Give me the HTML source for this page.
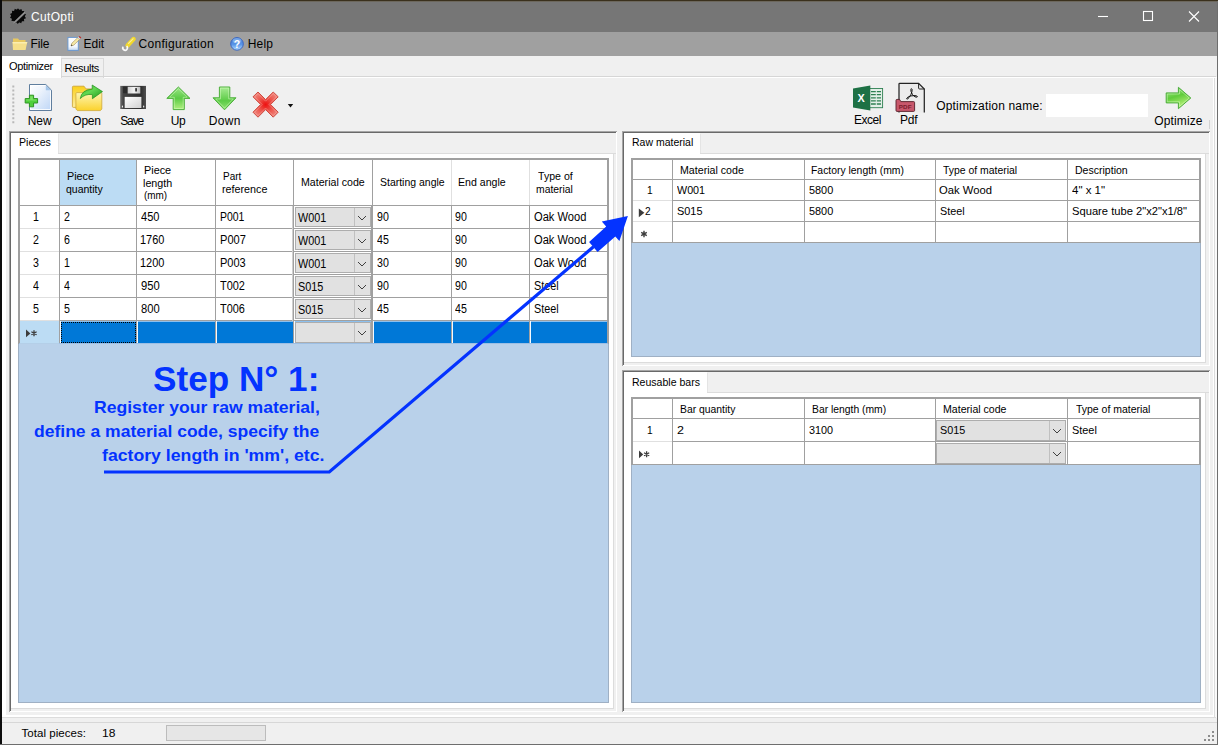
<!DOCTYPE html>
<html lang="en">
<head>
<meta charset="utf-8">
<title>CutOpti</title>
<style>
*{box-sizing:border-box;margin:0;padding:0}
html,body{width:1218px;height:745px;overflow:hidden;background:#f0f0f0}
body{position:relative;font-family:"Liberation Sans",sans-serif;font-size:11px;color:#000}
.a{position:absolute}
.t{position:absolute;white-space:nowrap;line-height:1;color:#000}
.w{color:#fff}
.blue{color:#0433ff;font-weight:bold}
svg{position:absolute;overflow:visible}
</style>
</head>
<body>

<div class="a" style="left:0px;top:0px;width:1218px;height:32px;background:#767676"></div>
<div class="a" style="left:0px;top:32px;width:1218px;height:24px;background:#a0a0a0"></div>
<div class="a" style="left:0px;top:0px;width:1218px;height:1px;background:#3a301c"></div>
<div class="a" style="left:0px;top:1px;width:1218px;height:1px;background:#6c675c"></div>
<svg style="left:10px;top:8px" width="16" height="16" viewBox="0 0 16 16"><g fill="#080808"><circle cx="8" cy="8" r="6.4"/><path d="M8 0.2 L9.3 2 L11.4 1 L12 3.1 L14.3 3 L14 5.3 L16 6.3 L14.8 8.2 L16 10.2 L13.9 11 L14.2 13.3 L11.9 13.2 L11.2 15.3 L9.2 14.3 L7.8 16 L6.4 14.2 L4.3 15.2 L3.8 13 L1.5 13 L1.9 10.8 L0 9.7 L1.2 7.8 L0 5.9 L2.1 5 L1.9 2.8 L4.1 2.9 L4.8 0.8 L6.8 1.8 Z"/></g><path d="M3.2 14.6 L14.6 3.6 L15.6 5.2 L4.8 15.6 Z" fill="#808080"/><path d="M3.6 14.9 L14.9 4" stroke="#a8a8a8" stroke-width=".7"/></svg>
<div class="t w" style="left:30.9px;top:11px;font-size:12px;letter-spacing:0.367px;">CutOpti</div>
<svg style="left:1095px;top:6px" width="110" height="20" viewBox="0 0 110 20"><g stroke="#fff" stroke-width="1.1" fill="none"><path d="M3 10.5 H13"/><rect x="48.5" y="5.5" width="9" height="9"/><path d="M94 5.5 L104 15.5 M104 5.5 L94 15.5"/></g></svg>
<svg style="left:12px;top:36px" width="16" height="16" viewBox="0 0 16 16"><path d="M1 2.5 h5 l1.2 1.5 h6.3 v9.5 h-12.5z" fill="#e8c860"/><path d="M0.5 6 h14.8 l-1.8 8 h-12.5z" fill="#f5df8a"/><path d="M0.5 6 h14.8 l-0.4 1.6 h-14z" fill="#fbeeb0"/></svg>
<div class="t" style="left:30.54px;top:38px;font-size:12px;letter-spacing:-0.127px;">File</div>
<svg style="left:67px;top:35px" width="16" height="17" viewBox="0 0 16 17"><defs><linearGradient id="gpg2" x1="0" y1="0" x2="0" y2="1"><stop offset="0" stop-color="#ffffff"/><stop offset=".7" stop-color="#f4f8fd"/><stop offset="1" stop-color="#c4d8f0"/></linearGradient></defs><rect x="0.9" y="2.4" width="10.4" height="13" fill="url(#gpg2)" stroke="#6b98d0" stroke-width="1"/><path d="M4 11 L4.9 8.2 L10.6 2.8 L12.4 4.6 L6.8 10.1 Z" fill="#f7eaa6" stroke="#a08850" stroke-width=".6"/><path d="M10.6 2.8 L11.6 1.8 L13.4 3.6 L12.4 4.6Z" fill="#d8d8d8"/><path d="M11.6 1.8 L12.6 0.9 L14.3 2.6 L13.4 3.6Z" fill="#c02c2c"/><path d="M4 11 L4.5 9.5 L5.5 10.5Z" fill="#333"/></svg>
<div class="t" style="left:83.54px;top:38px;font-size:12px;letter-spacing:-0.040px;">Edit</div>
<svg style="left:121px;top:36px" width="17" height="16" viewBox="0 0 17 16"><path d="M6.6 9.4 L12.6 3" stroke="#f2d82c" stroke-width="4.4" stroke-linecap="round"/><path d="M7.6 7.4 L12 2.8" stroke="#fbf09a" stroke-width="1.2" stroke-linecap="round"/><path d="M2.2 10.6 A2.3 2.3 0 1 0 5.6 10.2" fill="none" stroke="#f8f8f8" stroke-width="1.6"/></svg>
<div class="t" style="left:138.4px;top:38px;font-size:12px;letter-spacing:0.332px;">Configuration</div>
<svg style="left:229px;top:36px" width="16" height="16" viewBox="0 0 16 16"><defs><linearGradient id="ghelp" x1="0" y1="0" x2="0" y2="1"><stop offset="0" stop-color="#3f78d4"/><stop offset=".55" stop-color="#5a96e8"/><stop offset="1" stop-color="#b4dcff"/></linearGradient></defs><circle cx="8" cy="7.9" r="6.3" fill="url(#ghelp)" stroke="#3a66c0" stroke-width="1"/><ellipse cx="8" cy="4.6" rx="4.4" ry="2.6" fill="#9cc4f4" opacity=".55"/><text x="8" y="11.6" font-family="Liberation Sans, sans-serif" font-weight="bold" font-size="10.5" text-anchor="middle" fill="#fff">?</text></svg>
<div class="t" style="left:247.64px;top:38px;font-size:12px;letter-spacing:0.227px;">Help</div>
<div class="a" style="left:2px;top:77px;width:1215px;height:641px;background:#fff"></div>
<div class="a" style="left:6px;top:78px;width:1207px;height:637px;background:#f0f0f0"></div>
<div class="a" style="left:2px;top:56px;width:59px;height:22px;background:#fff"></div>
<div class="t" style="left:9.01px;top:61px;font-size:11px;letter-spacing:-0.365px;">Optimizer</div>
<div class="a" style="left:61px;top:58px;width:43px;height:20px;background:#f0f0f0;border:1px solid #d9d9d9;border-bottom:none"></div>
<div class="t" style="left:64.62px;top:63px;font-size:11px;letter-spacing:-0.320px;">Results</div>
<div class="a" style="left:61px;top:76px;width:1155px;height:1px;background:#d6d6d6"></div>
<div class="a" style="left:1213px;top:78px;width:1px;height:640px;background:#fff"></div>
<div class="a" style="left:1214px;top:78px;width:1px;height:640px;background:#dcdcdc"></div>
<div class="a" style="left:1215px;top:78px;width:2px;height:640px;background:#fafafa"></div>
<div class="a" style="left:2px;top:717px;width:1214px;height:1px;background:#dcdcdc"></div>
<div class="a" style="left:2px;top:718px;width:1215px;height:4px;background:#f0f0f0"></div>
<svg style="left:12px;top:85px" width="3" height="40" viewBox="0 0 3 40"><path d="M1.3 0.6 V39" stroke="#b8b8b8" stroke-width="2" stroke-dasharray="2 1.95"/></svg>
<svg style="left:0;top:78px" width="1218" height="54" viewBox="0 78 1218 54">
<defs>
<linearGradient id="gpage" x1="0" y1="0" x2="1" y2="1"><stop offset="0" stop-color="#ffffff"/><stop offset=".35" stop-color="#eef4fc"/><stop offset="1" stop-color="#bdd5f6"/></linearGradient>
<linearGradient id="ggreen" x1="0" y1="0" x2="0" y2="1"><stop offset="0" stop-color="#a4e88c"/><stop offset="1" stop-color="#4fbe3a"/></linearGradient>
<linearGradient id="ggreen2" x1="0" y1="0" x2="0" y2="1"><stop offset="0" stop-color="#8fe070"/><stop offset=".5" stop-color="#55c83c"/><stop offset="1" stop-color="#8fe070"/></linearGradient>
<linearGradient id="gup" x1="0" y1="0" x2="0" y2="1"><stop offset="0" stop-color="#9ae686"/><stop offset=".5" stop-color="#5ccb46"/><stop offset="1" stop-color="#b2f080"/></linearGradient>
<linearGradient id="gdn" x1="0" y1="0" x2="0" y2="1"><stop offset="0" stop-color="#a8ec94"/><stop offset=".6" stop-color="#5ccb46"/><stop offset="1" stop-color="#90e272"/></linearGradient>
<linearGradient id="gopt" x1="0" y1="0" x2=".35" y2="1"><stop offset="0" stop-color="#a6ea90"/><stop offset=".5" stop-color="#60cc3c"/><stop offset="1" stop-color="#b8f27a"/></linearGradient>
<linearGradient id="gfold" x1="0" y1="0" x2="0" y2="1"><stop offset="0" stop-color="#fdf6b4"/><stop offset="1" stop-color="#fbd22c"/></linearGradient>
<linearGradient id="gfoldb" x1="0" y1="0" x2="0" y2="1"><stop offset="0" stop-color="#fbd01c"/><stop offset="1" stop-color="#fdeea0"/></linearGradient>
<linearGradient id="garrow" x1="0" y1="0" x2="1" y2="1"><stop offset="0" stop-color="#2fa526"/><stop offset=".45" stop-color="#62d852"/><stop offset="1" stop-color="#1f9a1a"/></linearGradient>
<linearGradient id="gdisk" x1="0" y1="0" x2="1" y2="0"><stop offset="0" stop-color="#6e6e6e"/><stop offset=".12" stop-color="#444"/><stop offset=".8" stop-color="#2e2e2e"/><stop offset="1" stop-color="#505050"/></linearGradient>
<linearGradient id="gshut" x1="0" y1="0" x2="1" y2="0"><stop offset="0" stop-color="#cfcfcf"/><stop offset=".5" stop-color="#f4f4f4"/><stop offset="1" stop-color="#bdbdbd"/></linearGradient>
<linearGradient id="gsave" x1="0" y1="0" x2="1" y2="1"><stop offset="0" stop-color="#ffffff"/><stop offset="1" stop-color="#d0d0d0"/></linearGradient>
<radialGradient id="gred" cx=".5" cy=".5" r=".6"><stop offset="0" stop-color="#ee1010"/><stop offset=".45" stop-color="#ec5048"/><stop offset="1" stop-color="#f08a80"/></radialGradient>
</defs>
<!-- New -->
<path d="M29.5 84.5 H45.8 L51.5 90.2 V110.5 H29.5 Z" fill="url(#gpage)" stroke="#5f7e9e" stroke-width="1"/>
<path d="M30.5 85.5 H45.4 L50.5 90.6 V109.5 H30.5 Z" fill="none" stroke="#ffffff" stroke-opacity=".85" stroke-width="1"/>
<path d="M45.8 85.2 V90.2 H50.9 Z" fill="#a4c6ea"/>
<path d="M29.4 95.2 H33.6 V98.6 H37.6 V103 H33.6 V106.8 H29.4 V103 H25.2 V98.6 H29.4 Z" fill="#4fcf3c" stroke="#2f9424" stroke-width="1" stroke-linejoin="round"/>
<path d="M30.2 96.2 H32.8 V99.4 H36.6 V100.6 H26.2 V99.4 H30.2 Z" fill="#8fe878" opacity=".7"/>
<!-- Open -->
<path d="M72.4 87.2 Q72.4 86.2 73.4 86.2 H84 L86 88.9 H97 V107.4 H73.4 Q72.4 107.4 72.4 106.4 Z" fill="url(#gfoldb)" stroke="#c9a030" stroke-width=".8"/>
<path d="M75.9 93.6 Q75.9 92.6 76.9 92.6 H100.8 Q101.8 92.6 101.8 93.6 V109 L100.4 110.6 H77.4 L75.9 109 Z" fill="url(#gfold)" stroke="#cfa838" stroke-width=".8"/>
<path d="M80.3 98.6 Q81.5 89.6 92.2 89.2 V85 L102.5 91.6 L92.4 98.7 V94.6 Q85 93.6 80.3 98.6 Z" fill="url(#garrow)" stroke="#1f8f1c" stroke-width=".7" stroke-linejoin="round"/>
<!-- Save -->
<rect x="120.2" y="85.9" width="25.8" height="23.1" fill="url(#gdisk)"/>
<rect x="123.1" y="86.8" width="4.6" height="6.4" fill="#2c2c2c"/>
<rect x="127.7" y="86.8" width="12.6" height="6.7" fill="url(#gshut)"/>
<rect x="135.2" y="88" width="1.8" height="3.6" rx=".6" fill="#3a3a3a"/>
<rect x="124.7" y="96.9" width="16.7" height="11.1" fill="url(#gsave)"/>
<rect x="121.9" y="105.4" width="1.1" height="2.2" rx=".5" fill="#f0f0f0"/><rect x="143.1" y="105.4" width="1.1" height="2.2" rx=".5" fill="#f0f0f0"/>
<!-- Up -->
<path d="M178.4 87 L190 98.4 H184.3 V109.6 H173.2 V98.4 H166.8 Z" fill="url(#gup)" stroke="#4fb03e" stroke-width="1" stroke-linejoin="round"/>
<path d="M178.4 88.7 L187.2 97.3 H183.2 V108.5 H174.3 V97.3 H169.6 Z" fill="none" stroke="#d8fcc4" stroke-opacity=".55" stroke-width=".9"/>
<!-- Down -->
<path d="M224.5 109.8 L236 97.8 H229.8 V87 H219.4 V97.8 H213 Z" fill="url(#gdn)" stroke="#4fb03e" stroke-width="1" stroke-linejoin="round"/>
<path d="M224.5 108.1 L233.3 98.9 H228.7 V88.1 H220.5 V98.9 H215.7 Z" fill="none" stroke="#d8fcc4" stroke-opacity=".55" stroke-width=".9"/>
<!-- Delete X -->
<path d="M253 96.8 L258 92 L265.6 99.6 L273.2 92 L278.2 96.8 L270.6 104.5 L278.2 112.2 L273.2 117.2 L265.6 109.6 L258 117.2 L253 112.2 L260.6 104.5 Z" fill="url(#gred)" stroke="#cf4a40" stroke-width="1" stroke-linejoin="round"/>
<path d="M254.6 96.8 L258 93.6 L265.6 101.2 L273.2 93.6 L276.6 96.8 L269 104.5 L276.6 112.2 L273.2 115.6 L265.6 108 L258 115.6 L254.6 112.2 L262.2 104.5 Z" fill="none" stroke="#ffd8d0" stroke-opacity=".4" stroke-width=".8"/>
<path d="M287.8 104 H293.2 L290.5 107.4 Z" fill="#111"/>
<!-- Excel -->
<rect x="868" y="88.5" width="14.6" height="19.2" fill="#e4efe8" stroke="#2f8052" stroke-width=".9"/>
<g stroke="#2f8052" stroke-width="1.3"><path d="M871 91.6 H881 M871 94.7 H881 M871 97.8 H881 M871 100.9 H881 M871 104 H881"/></g>
<path d="M876.3 89 V107" stroke="#e4efe8" stroke-width="1"/>
<path d="M853 88.4 L870.3 85.6 V110.4 L853 107.4 Z" fill="#1e7145"/>
<!-- Pdf -->
<path d="M899 112.4 V84 Q899 83.3 899.7 83.3 H918.6 L924.3 89 V112.4" fill="#ececec" stroke="#242424" stroke-width="1.25"/>
<path d="M918.6 83.3 V88 Q918.6 89 919.6 89 H924.3" fill="none" stroke="#242424" stroke-width="1"/>
<path d="M896 100.4 Q896 99.4 897 99.4 H899.6 L900.8 101.6 H913.6 Q914.6 101.6 914.6 102.6 V110.4 Q914.6 111.4 913.6 111.4 H897 Q896 111.4 896 110.4 Z" fill="#c8586c" stroke="#56202a" stroke-width=".9"/>
<path d="M911.4 88.6 Q912.4 88.6 912 91.4 Q911.6 94 909 97.6 Q907.6 99.4 906.8 99 Q906.2 98.4 907.8 97.2 Q910.4 95.4 915 95.6 Q917.6 95.8 917.4 96.8 Q917 97.6 915 96.8 Q912 95.2 911 91.4 Q910.6 88.8 911.4 88.6Z" fill="none" stroke="#111" stroke-width="1"/>
<text x="905.3" y="109.3" font-family="Liberation Sans, sans-serif" font-weight="bold" font-size="6.2" text-anchor="middle" fill="#7a1c2c" letter-spacing=".3">PDF</text>
<!-- Optimize -->
<path d="M1166.2 92.9 H1178.4 V87.3 L1190.8 98 L1178.4 108.7 V102.9 H1166.2 Z" fill="url(#gopt)" stroke="#4cac3c" stroke-width="1" stroke-linejoin="round"/>
<path d="M1167.3 94 H1179.5 V89.6 L1189.2 98 L1179.5 106.4 V101.8 H1167.3 Z" fill="none" stroke="#dcfcc8" stroke-opacity=".5" stroke-width=".9"/>
</svg>
<svg style="left:855.3px;top:92px" width="12" height="12" viewBox="0 0 12 12"><text x="6" y="9.9" font-family="Liberation Sans, sans-serif" font-weight="bold" font-size="10.8" text-anchor="middle" fill="#fff">X</text></svg>
<div class="t" style="left:27.74px;top:115px;font-size:12px;letter-spacing:-0.050px;">New</div>
<div class="t" style="left:72.36px;top:115px;font-size:12px;letter-spacing:-0.293px;">Open</div>
<div class="t" style="left:120.16px;top:115px;font-size:12px;letter-spacing:-1.080px;">Save</div>
<div class="t" style="left:170.7px;top:115px;font-size:12px;letter-spacing:-0.320px;">Up</div>
<div class="t" style="left:208.84px;top:115px;font-size:12px;letter-spacing:0.307px;">Down</div>
<div class="t" style="left:853.94px;top:114px;font-size:12px;letter-spacing:-0.450px;">Excel</div>
<div class="t" style="left:900.04px;top:114px;font-size:12px;letter-spacing:-0.200px;">Pdf</div>
<div class="t" style="left:936.16px;top:100px;font-size:12px;letter-spacing:0.179px;">Optimization name:</div>
<div class="a" style="left:1046px;top:94px;width:102px;height:23px;background:#fff"></div>
<div class="t" style="left:1154.26px;top:115px;font-size:12px;letter-spacing:0.126px;">Optimize</div>
<div class="a" style="left:9px;top:131px;width:608px;height:581px;background:#fff"></div>
<div class="a" style="left:9px;top:131px;width:608px;height:1px;background:#a6a6a6"></div>
<div class="a" style="left:9px;top:131px;width:1px;height:581px;background:#a6a6a6"></div>
<div class="a" style="left:10px;top:132px;width:606px;height:1px;background:#696969"></div>
<div class="a" style="left:10px;top:132px;width:1px;height:579px;background:#696969"></div>
<div class="a" style="left:11px;top:133px;width:605px;height:21px;background:#f0f0f0"></div>
<div class="a" style="left:11px;top:133px;width:47px;height:22px;background:#fff"></div>
<div class="a" style="left:58px;top:153px;width:558px;height:1px;background:#dcdcdc"></div>
<div class="a" style="left:58px;top:134px;width:1px;height:19px;background:#e4e4e4"></div>
<div class="a" style="left:613px;top:154px;width:1px;height:555px;background:#dcdcdc"></div>
<div class="a" style="left:614px;top:154px;width:2px;height:557px;background:#f0f0f0"></div>
<div class="a" style="left:11px;top:708px;width:603px;height:1px;background:#dcdcdc"></div>
<div class="a" style="left:11px;top:709px;width:605px;height:2px;background:#f0f0f0"></div>
<div class="t" style="left:18.75px;top:137px;font-size:11.5px;transform-origin:0 0;transform:scaleX(0.9223);">Pieces</div>
<div class="a" style="left:18px;top:158px;width:591px;height:545px;background:#b9d1ea;border:1px solid #9fb0c4"></div>
<div class="a" style="left:18px;top:158px;width:591px;height:186px;background:#fff;border:1px solid #a0a0a0"></div>
<div class="a" style="left:19px;top:159px;width:589px;height:1px;background:#a0a0a0"></div>
<div class="a" style="left:19px;top:159px;width:1px;height:185px;background:#a0a0a0"></div>
<div class="a" style="left:59px;top:159px;width:1px;height:185px;background:#a0a0a0"></div>
<div class="a" style="left:136px;top:159px;width:1px;height:185px;background:#a0a0a0"></div>
<div class="a" style="left:215px;top:159px;width:1px;height:185px;background:#a0a0a0"></div>
<div class="a" style="left:293px;top:159px;width:1px;height:185px;background:#a0a0a0"></div>
<div class="a" style="left:372px;top:159px;width:1px;height:185px;background:#a0a0a0"></div>
<div class="a" style="left:451px;top:159px;width:1px;height:185px;background:#a0a0a0"></div>
<div class="a" style="left:529px;top:159px;width:1px;height:185px;background:#a0a0a0"></div>
<div class="a" style="left:607px;top:159px;width:1px;height:185px;background:#a0a0a0"></div>
<div class="a" style="left:451px;top:160px;width:1px;height:45px;background:#e0e0e0"></div>
<div class="a" style="left:529px;top:160px;width:1px;height:45px;background:#e0e0e0"></div>
<div class="a" style="left:19px;top:205px;width:589px;height:1px;background:#a0a0a0"></div>
<div class="a" style="left:19px;top:228px;width:589px;height:1px;background:#a0a0a0"></div>
<div class="a" style="left:19px;top:251px;width:589px;height:1px;background:#a0a0a0"></div>
<div class="a" style="left:19px;top:274px;width:589px;height:1px;background:#a0a0a0"></div>
<div class="a" style="left:19px;top:297px;width:589px;height:1px;background:#a0a0a0"></div>
<div class="a" style="left:19px;top:320px;width:589px;height:1px;background:#a0a0a0"></div>
<div class="a" style="left:19px;top:343px;width:589px;height:1px;background:#a0a0a0"></div>
<div class="a" style="left:20px;top:228px;width:39px;height:1px;background:#e0e0e0"></div>
<div class="a" style="left:20px;top:251px;width:39px;height:1px;background:#e0e0e0"></div>
<div class="a" style="left:20px;top:274px;width:39px;height:1px;background:#e0e0e0"></div>
<div class="a" style="left:20px;top:297px;width:39px;height:1px;background:#e0e0e0"></div>
<div class="a" style="left:20px;top:320px;width:39px;height:1px;background:#e0e0e0"></div>
<div class="a" style="left:371px;top:206px;width:1px;height:138px;background:#a0a0a0"></div>
<div class="a" style="left:292px;top:206px;width:1px;height:138px;background:#cfcfcf"></div>
<div class="a" style="left:60px;top:160px;width:76px;height:45px;background:#bcdcf4"></div>
<div class="t" style="left:66.64px;top:171px;font-size:11.5px;transform-origin:0 0;transform:scaleX(0.9390);">Piece</div>
<div class="t" style="left:66.48px;top:184px;font-size:11.5px;transform-origin:0 0;transform:scaleX(0.9135);">quantity</div>
<div class="t" style="left:143.63px;top:165px;font-size:11.5px;transform-origin:0 0;transform:scaleX(0.9426);">Piece</div>
<div class="t" style="left:143.40px;top:178px;font-size:11.5px;transform-origin:0 0;transform:scaleX(0.9331);">length</div>
<div class="t" style="left:143.51px;top:190px;font-size:11.5px;transform-origin:0 0;transform:scaleX(0.8617);">(mm)</div>
<div class="t" style="left:222.70px;top:171px;font-size:11.5px;transform-origin:0 0;transform:scaleX(0.8671);">Part</div>
<div class="t" style="left:222.20px;top:184px;font-size:11.5px;transform-origin:0 0;transform:scaleX(0.9350);">reference</div>
<div class="t" style="left:300.95px;top:177px;font-size:11.5px;transform-origin:0 0;transform:scaleX(0.9228);">Material code</div>
<div class="t" style="left:380.03px;top:177px;font-size:11.5px;transform-origin:0 0;transform:scaleX(0.9103);">Starting angle</div>
<div class="t" style="left:457.85px;top:177px;font-size:11.5px;transform-origin:0 0;transform:scaleX(0.9201);">End angle</div>
<div class="t" style="left:537.59px;top:171px;font-size:11.5px;transform-origin:0 0;transform:scaleX(0.9202);">Type of</div>
<div class="t" style="left:536.13px;top:184px;font-size:11.5px;transform-origin:0 0;transform:scaleX(0.9013);">material</div>
<div class="t" style="left:32.70px;top:211px;font-size:12px;transform-origin:0 0;transform:scaleX(0.8850);">1</div>
<div class="t" style="left:63.87px;top:211px;font-size:12px;transform-origin:0 0;transform:scaleX(0.8850);">2</div>
<div class="t" style="left:140.88px;top:211px;font-size:12px;transform-origin:0 0;transform:scaleX(0.9213);">450</div>
<div class="t" style="left:219.66px;top:211px;font-size:12px;transform-origin:0 0;transform:scaleX(0.8710);">P001</div>
<div class="a" style="left:295px;top:207px;width:76px;height:20px;background:#e1e1e1;border:1px solid #adadad"></div>
<div class="a" style="left:354px;top:208px;width:1px;height:18px;background:#c0c0c0"></div>
<svg style="left:357px;top:214.5px" width="10" height="6" viewBox="0 0 10 6"><path d="M1 1 L5 5 L9 1" fill="none" stroke="#404040" stroke-width="1"/></svg>
<div class="t" style="left:298.35px;top:212px;font-size:12px;transform-origin:0 0;transform:scaleX(0.9017);">W001</div>
<div class="t" style="left:377.12px;top:211px;font-size:12px;transform-origin:0 0;transform:scaleX(0.8850);">90</div>
<div class="t" style="left:455.02px;top:211px;font-size:12px;transform-origin:0 0;transform:scaleX(0.8850);">90</div>
<div class="t" style="left:533.50px;top:211px;font-size:12px;transform-origin:0 0;transform:scaleX(0.9275);">Oak Wood</div>
<div class="t" style="left:32.97px;top:234px;font-size:12px;transform-origin:0 0;transform:scaleX(0.8850);">2</div>
<div class="t" style="left:63.87px;top:234px;font-size:12px;transform-origin:0 0;transform:scaleX(0.8850);">6</div>
<div class="t" style="left:140.28px;top:234px;font-size:12px;transform-origin:0 0;transform:scaleX(0.9141);">1760</div>
<div class="t" style="left:219.61px;top:234px;font-size:12px;transform-origin:0 0;transform:scaleX(0.9221);">P007</div>
<div class="a" style="left:295px;top:230px;width:76px;height:20px;background:#e1e1e1;border:1px solid #adadad"></div>
<div class="a" style="left:354px;top:231px;width:1px;height:18px;background:#c0c0c0"></div>
<svg style="left:357px;top:237.5px" width="10" height="6" viewBox="0 0 10 6"><path d="M1 1 L5 5 L9 1" fill="none" stroke="#404040" stroke-width="1"/></svg>
<div class="t" style="left:298.35px;top:235px;font-size:12px;transform-origin:0 0;transform:scaleX(0.9017);">W001</div>
<div class="t" style="left:377.39px;top:234px;font-size:12px;transform-origin:0 0;transform:scaleX(0.8850);">45</div>
<div class="t" style="left:455.02px;top:234px;font-size:12px;transform-origin:0 0;transform:scaleX(0.8850);">90</div>
<div class="t" style="left:533.50px;top:234px;font-size:12px;transform-origin:0 0;transform:scaleX(0.9275);">Oak Wood</div>
<div class="t" style="left:33.13px;top:257px;font-size:12px;transform-origin:0 0;transform:scaleX(0.8850);">3</div>
<div class="t" style="left:63.60px;top:257px;font-size:12px;transform-origin:0 0;transform:scaleX(0.8850);">1</div>
<div class="t" style="left:140.28px;top:257px;font-size:12px;transform-origin:0 0;transform:scaleX(0.9141);">1200</div>
<div class="t" style="left:219.62px;top:257px;font-size:12px;transform-origin:0 0;transform:scaleX(0.9180);">P003</div>
<div class="a" style="left:295px;top:253px;width:76px;height:20px;background:#e1e1e1;border:1px solid #adadad"></div>
<div class="a" style="left:354px;top:254px;width:1px;height:18px;background:#c0c0c0"></div>
<svg style="left:357px;top:260.5px" width="10" height="6" viewBox="0 0 10 6"><path d="M1 1 L5 5 L9 1" fill="none" stroke="#404040" stroke-width="1"/></svg>
<div class="t" style="left:298.35px;top:258px;font-size:12px;transform-origin:0 0;transform:scaleX(0.9017);">W001</div>
<div class="t" style="left:377.23px;top:257px;font-size:12px;transform-origin:0 0;transform:scaleX(0.8850);">30</div>
<div class="t" style="left:455.02px;top:257px;font-size:12px;transform-origin:0 0;transform:scaleX(0.8850);">90</div>
<div class="t" style="left:533.50px;top:257px;font-size:12px;transform-origin:0 0;transform:scaleX(0.9275);">Oak Wood</div>
<div class="t" style="left:33.29px;top:280px;font-size:12px;transform-origin:0 0;transform:scaleX(0.8850);">4</div>
<div class="t" style="left:64.19px;top:280px;font-size:12px;transform-origin:0 0;transform:scaleX(0.8850);">4</div>
<div class="t" style="left:140.59px;top:280px;font-size:12px;transform-origin:0 0;transform:scaleX(0.9359);">950</div>
<div class="t" style="left:220.28px;top:280px;font-size:12px;transform-origin:0 0;transform:scaleX(0.9125);">T002</div>
<div class="a" style="left:295px;top:276px;width:76px;height:20px;background:#e1e1e1;border:1px solid #adadad"></div>
<div class="a" style="left:354px;top:277px;width:1px;height:18px;background:#c0c0c0"></div>
<svg style="left:357px;top:283.5px" width="10" height="6" viewBox="0 0 10 6"><path d="M1 1 L5 5 L9 1" fill="none" stroke="#404040" stroke-width="1"/></svg>
<div class="t" style="left:297.91px;top:281px;font-size:12px;transform-origin:0 0;transform:scaleX(0.9037);">S015</div>
<div class="t" style="left:377.12px;top:280px;font-size:12px;transform-origin:0 0;transform:scaleX(0.8850);">90</div>
<div class="t" style="left:455.02px;top:280px;font-size:12px;transform-origin:0 0;transform:scaleX(0.8850);">90</div>
<div class="t" style="left:533.51px;top:280px;font-size:12px;transform-origin:0 0;transform:scaleX(0.9007);">Steel</div>
<div class="t" style="left:33.08px;top:303px;font-size:12px;transform-origin:0 0;transform:scaleX(0.8850);">5</div>
<div class="t" style="left:63.98px;top:303px;font-size:12px;transform-origin:0 0;transform:scaleX(0.8850);">5</div>
<div class="t" style="left:140.65px;top:303px;font-size:12px;transform-origin:0 0;transform:scaleX(0.9329);">800</div>
<div class="t" style="left:220.28px;top:303px;font-size:12px;transform-origin:0 0;transform:scaleX(0.9084);">T006</div>
<div class="a" style="left:295px;top:299px;width:76px;height:20px;background:#e1e1e1;border:1px solid #adadad"></div>
<div class="a" style="left:354px;top:300px;width:1px;height:18px;background:#c0c0c0"></div>
<svg style="left:357px;top:306.5px" width="10" height="6" viewBox="0 0 10 6"><path d="M1 1 L5 5 L9 1" fill="none" stroke="#404040" stroke-width="1"/></svg>
<div class="t" style="left:297.91px;top:304px;font-size:12px;transform-origin:0 0;transform:scaleX(0.9037);">S015</div>
<div class="t" style="left:377.39px;top:303px;font-size:12px;transform-origin:0 0;transform:scaleX(0.8850);">45</div>
<div class="t" style="left:455.29px;top:303px;font-size:12px;transform-origin:0 0;transform:scaleX(0.8850);">45</div>
<div class="t" style="left:533.51px;top:303px;font-size:12px;transform-origin:0 0;transform:scaleX(0.9007);">Steel</div>
<div class="a" style="left:20px;top:321px;width:39px;height:22px;background:#bcdcf4"></div>
<div class="a" style="left:60px;top:321px;width:76px;height:23px;background:#0078d7"></div>
<div class="a" style="left:60px;top:321px;width:1px;height:22px;background:#f4faff"></div>
<div class="a" style="left:61px;top:321px;width:75px;height:1px;background:#8cc0ee"></div>
<div class="a" style="left:137px;top:321px;width:78px;height:23px;background:#0078d7"></div>
<div class="a" style="left:137px;top:321px;width:1px;height:22px;background:#f4faff"></div>
<div class="a" style="left:138px;top:321px;width:77px;height:1px;background:#8cc0ee"></div>
<div class="a" style="left:216px;top:321px;width:77px;height:23px;background:#0078d7"></div>
<div class="a" style="left:216px;top:321px;width:1px;height:22px;background:#f4faff"></div>
<div class="a" style="left:217px;top:321px;width:76px;height:1px;background:#8cc0ee"></div>
<div class="a" style="left:294px;top:321px;width:78px;height:23px;background:#0078d7"></div>
<div class="a" style="left:294px;top:321px;width:1px;height:22px;background:#f4faff"></div>
<div class="a" style="left:295px;top:321px;width:77px;height:1px;background:#8cc0ee"></div>
<div class="a" style="left:373px;top:321px;width:78px;height:23px;background:#0078d7"></div>
<div class="a" style="left:373px;top:321px;width:1px;height:22px;background:#f4faff"></div>
<div class="a" style="left:374px;top:321px;width:77px;height:1px;background:#8cc0ee"></div>
<div class="a" style="left:452px;top:321px;width:77px;height:23px;background:#0078d7"></div>
<div class="a" style="left:452px;top:321px;width:1px;height:22px;background:#f4faff"></div>
<div class="a" style="left:453px;top:321px;width:76px;height:1px;background:#8cc0ee"></div>
<div class="a" style="left:530px;top:321px;width:77px;height:23px;background:#0078d7"></div>
<div class="a" style="left:530px;top:321px;width:1px;height:22px;background:#f4faff"></div>
<div class="a" style="left:531px;top:321px;width:76px;height:1px;background:#8cc0ee"></div>
<div class="a" style="left:19px;top:343px;width:589px;height:1px;background:#9dbfe4"></div>
<div class="a" style="left:20px;top:343px;width:39px;height:1px;background:#b4cfe8"></div>
<div class="a" style="left:61px;top:322px;width:75px;height:21px;border:1px dotted #000;background:#0078d7"></div>
<div class="a" style="left:295px;top:322px;width:76px;height:21px;background:#e1e1e1;border:1px solid #adadad"></div>
<div class="a" style="left:354px;top:323px;width:1px;height:19px;background:#c0c0c0"></div>
<svg style="left:357px;top:330.0px" width="10" height="6" viewBox="0 0 10 6"><path d="M1 1 L5 5 L9 1" fill="none" stroke="#404040" stroke-width="1"/></svg>
<div class="a" style="left:371px;top:321px;width:1px;height:22px;background:#a0a0a0"></div>
<svg style="left:25px;top:329px" width="14" height="9" viewBox="0 0 14 9"><path d="M1 0.6 L5.4 4.4 L1 8.2 Z" fill="#3c3c3c"/><path d="M9 1.2 V7.2 M6.4 2.7 L11.6 5.7 M11.6 2.7 L6.4 5.7" stroke="#3c3c3c" stroke-width="1.3"/></svg>
<div class="a" style="left:622px;top:131px;width:588px;height:235px;background:#fff"></div>
<div class="a" style="left:622px;top:131px;width:588px;height:1px;background:#a6a6a6"></div>
<div class="a" style="left:622px;top:131px;width:1px;height:235px;background:#a6a6a6"></div>
<div class="a" style="left:623px;top:132px;width:586px;height:1px;background:#696969"></div>
<div class="a" style="left:623px;top:132px;width:1px;height:233px;background:#696969"></div>
<div class="a" style="left:624px;top:133px;width:585px;height:21px;background:#f0f0f0"></div>
<div class="a" style="left:624px;top:133px;width:76px;height:22px;background:#fff"></div>
<div class="a" style="left:700px;top:153px;width:509px;height:1px;background:#dcdcdc"></div>
<div class="a" style="left:700px;top:134px;width:1px;height:19px;background:#e4e4e4"></div>
<div class="a" style="left:1205px;top:154px;width:1px;height:209px;background:#dcdcdc"></div>
<div class="a" style="left:1206px;top:154px;width:3px;height:211px;background:#f0f0f0"></div>
<div class="a" style="left:624px;top:362px;width:582px;height:1px;background:#dcdcdc"></div>
<div class="a" style="left:624px;top:363px;width:585px;height:2px;background:#f0f0f0"></div>
<div class="t" style="left:631.76px;top:137px;font-size:11.5px;transform-origin:0 0;transform:scaleX(0.9124);">Raw material</div>
<div class="a" style="left:631px;top:158px;width:570px;height:199px;background:#b9d1ea;border:1px solid #9fb0c4"></div>
<div class="a" style="left:631px;top:158px;width:570px;height:85px;background:#fff;border:1px solid #a0a0a0"></div>
<div class="a" style="left:632px;top:159px;width:568px;height:1px;background:#a0a0a0"></div>
<div class="a" style="left:632px;top:159px;width:1px;height:84px;background:#a0a0a0"></div>
<div class="a" style="left:672px;top:159px;width:1px;height:84px;background:#a0a0a0"></div>
<div class="a" style="left:804px;top:159px;width:1px;height:84px;background:#a0a0a0"></div>
<div class="a" style="left:935px;top:159px;width:1px;height:84px;background:#a0a0a0"></div>
<div class="a" style="left:1067px;top:159px;width:1px;height:84px;background:#a0a0a0"></div>
<div class="a" style="left:1199px;top:159px;width:1px;height:84px;background:#a0a0a0"></div>
<div class="a" style="left:632px;top:179px;width:568px;height:1px;background:#a0a0a0"></div>
<div class="a" style="left:632px;top:200px;width:568px;height:1px;background:#a0a0a0"></div>
<div class="a" style="left:632px;top:221px;width:568px;height:1px;background:#a0a0a0"></div>
<div class="a" style="left:632px;top:242px;width:568px;height:1px;background:#a0a0a0"></div>
<div class="a" style="left:633px;top:200px;width:39px;height:1px;background:#e0e0e0"></div>
<div class="a" style="left:633px;top:221px;width:39px;height:1px;background:#e0e0e0"></div>
<div class="t" style="left:679.65px;top:165px;font-size:11.5px;transform-origin:0 0;transform:scaleX(0.9243);">Material code</div>
<div class="t" style="left:811.47px;top:165px;font-size:11.5px;transform-origin:0 0;transform:scaleX(0.9036);">Factory length (mm)</div>
<div class="t" style="left:943.49px;top:165px;font-size:11.5px;transform-origin:0 0;transform:scaleX(0.9061);">Type of material</div>
<div class="t" style="left:1074.86px;top:165px;font-size:11.5px;transform-origin:0 0;transform:scaleX(0.9161);">Description</div>
<div class="t" style="left:646.64px;top:185px;font-size:11.5px;transform-origin:0 0;transform:scaleX(0.8850);">1</div>
<div class="t" style="left:677.25px;top:185px;font-size:11.5px;transform-origin:0 0;transform:scaleX(0.9341);">W001</div>
<div class="t" style="left:808.96px;top:185px;font-size:11.5px;transform-origin:0 0;transform:scaleX(0.9464);">5800</div>
<div class="t" style="left:939.09px;top:185px;font-size:11.5px;transform-origin:0 0;transform:scaleX(0.9773);">Oak Wood</div>
<div class="t" style="left:1071.77px;top:185px;font-size:11.5px;transform-origin:0 0;transform:scaleX(0.9991);">4&quot; x 1&quot;</div>
<div class="t" style="left:645.49px;top:206px;font-size:11.5px;transform-origin:0 0;transform:scaleX(0.8850);">2</div>
<div class="t" style="left:676.81px;top:206px;font-size:11.5px;transform-origin:0 0;transform:scaleX(0.9507);">S015</div>
<div class="t" style="left:808.96px;top:206px;font-size:11.5px;transform-origin:0 0;transform:scaleX(0.9464);">5800</div>
<div class="t" style="left:939.51px;top:206px;font-size:11.5px;transform-origin:0 0;transform:scaleX(0.9399);">Steel</div>
<div class="t" style="left:1071.90px;top:206px;font-size:11.5px;transform-origin:0 0;transform:scaleX(0.9718);">Square tube 2&quot;x2&quot;x1/8&quot;</div>
<svg style="left:638px;top:208px" width="8" height="10" viewBox="0 0 8 10"><path d="M0.8 0.4 L6.4 4.8 L0.8 9.2 Z" fill="#3c3c3c"/></svg>
<svg style="left:640px;top:230px" width="8" height="8" viewBox="0 0 8 8"><path d="M4 0.8 V7.2 M1.2 2.4 L6.8 5.6 M6.8 2.4 L1.2 5.6" stroke="#3c3c3c" stroke-width="1.4"/></svg>
<div class="a" style="left:622px;top:370px;width:588px;height:342px;background:#fff"></div>
<div class="a" style="left:622px;top:370px;width:588px;height:1px;background:#a6a6a6"></div>
<div class="a" style="left:622px;top:370px;width:1px;height:342px;background:#a6a6a6"></div>
<div class="a" style="left:623px;top:371px;width:586px;height:1px;background:#696969"></div>
<div class="a" style="left:623px;top:371px;width:1px;height:340px;background:#696969"></div>
<div class="a" style="left:624px;top:372px;width:585px;height:21px;background:#f0f0f0"></div>
<div class="a" style="left:624px;top:372px;width:83px;height:22px;background:#fff"></div>
<div class="a" style="left:707px;top:392px;width:502px;height:1px;background:#dcdcdc"></div>
<div class="a" style="left:707px;top:373px;width:1px;height:19px;background:#e4e4e4"></div>
<div class="a" style="left:1205px;top:393px;width:1px;height:316px;background:#dcdcdc"></div>
<div class="a" style="left:1206px;top:393px;width:3px;height:318px;background:#f0f0f0"></div>
<div class="a" style="left:624px;top:708px;width:582px;height:1px;background:#dcdcdc"></div>
<div class="a" style="left:624px;top:709px;width:585px;height:2px;background:#f0f0f0"></div>
<div class="t" style="left:631.76px;top:377px;font-size:11.5px;transform-origin:0 0;transform:scaleX(0.9169);">Reusable bars</div>
<div class="a" style="left:631px;top:397px;width:570px;height:306px;background:#b9d1ea;border:1px solid #9fb0c4"></div>
<div class="a" style="left:631px;top:397px;width:570px;height:68px;background:#fff;border:1px solid #a0a0a0"></div>
<div class="a" style="left:632px;top:398px;width:568px;height:1px;background:#a0a0a0"></div>
<div class="a" style="left:632px;top:398px;width:1px;height:67px;background:#a0a0a0"></div>
<div class="a" style="left:672px;top:398px;width:1px;height:67px;background:#a0a0a0"></div>
<div class="a" style="left:804px;top:398px;width:1px;height:67px;background:#a0a0a0"></div>
<div class="a" style="left:935px;top:398px;width:1px;height:67px;background:#a0a0a0"></div>
<div class="a" style="left:1067px;top:398px;width:1px;height:67px;background:#a0a0a0"></div>
<div class="a" style="left:1199px;top:398px;width:1px;height:67px;background:#a0a0a0"></div>
<div class="a" style="left:632px;top:418px;width:568px;height:1px;background:#a0a0a0"></div>
<div class="a" style="left:632px;top:441px;width:568px;height:1px;background:#a0a0a0"></div>
<div class="a" style="left:632px;top:464px;width:568px;height:1px;background:#a0a0a0"></div>
<div class="a" style="left:633px;top:441px;width:39px;height:1px;background:#e0e0e0"></div>
<div class="t" style="left:679.67px;top:404px;font-size:11.5px;transform-origin:0 0;transform:scaleX(0.9018);">Bar quantity</div>
<div class="t" style="left:811.67px;top:404px;font-size:11.5px;transform-origin:0 0;transform:scaleX(0.8999);">Bar length (mm)</div>
<div class="t" style="left:942.95px;top:404px;font-size:11.5px;transform-origin:0 0;transform:scaleX(0.9198);">Material code</div>
<div class="t" style="left:1075.79px;top:404px;font-size:11.5px;transform-origin:0 0;transform:scaleX(0.9098);">Type of material</div>
<div class="t" style="left:646.64px;top:425px;font-size:11.5px;transform-origin:0 0;transform:scaleX(0.8850);">1</div>
<div class="t" style="left:676.67px;top:425px;font-size:11.5px;transform-origin:0 0;transform:scaleX(1.0893);">2</div>
<div class="t" style="left:809.02px;top:425px;font-size:11.5px;transform-origin:0 0;transform:scaleX(0.9402);">3100</div>
<div class="a" style="left:936px;top:420px;width:130px;height:21px;background:#e1e1e1;border:1px solid #adadad"></div>
<div class="a" style="left:1049px;top:421px;width:1px;height:19px;background:#c0c0c0"></div>
<svg style="left:1052px;top:428.0px" width="10" height="6" viewBox="0 0 10 6"><path d="M1 1 L5 5 L9 1" fill="none" stroke="#404040" stroke-width="1"/></svg>
<div class="t" style="left:940.21px;top:425px;font-size:11.5px;transform-origin:0 0;transform:scaleX(0.9391);">S015</div>
<div class="t" style="left:1071.51px;top:425px;font-size:11.5px;transform-origin:0 0;transform:scaleX(0.9479);">Steel</div>
<div class="a" style="left:936px;top:443px;width:130px;height:21px;background:#e1e1e1;border:1px solid #adadad"></div>
<div class="a" style="left:1049px;top:444px;width:1px;height:19px;background:#c0c0c0"></div>
<svg style="left:1052px;top:451.0px" width="10" height="6" viewBox="0 0 10 6"><path d="M1 1 L5 5 L9 1" fill="none" stroke="#404040" stroke-width="1"/></svg>
<svg style="left:638px;top:450px" width="14" height="9" viewBox="0 0 14 9"><path d="M1 0.6 L5.2 4.4 L1 8.2 Z" fill="#3c3c3c"/><path d="M8.6 1.2 V7.2 M6 2.7 L11.2 5.7 M11.2 2.7 L6 5.7" stroke="#3c3c3c" stroke-width="1.3"/></svg>
<div class="a" style="left:2px;top:722px;width:1215px;height:1px;background:#d7d7d7"></div>
<div class="t" style="left:21.57px;top:728px;font-size:11.5px;letter-spacing:0.044px;">Total pieces:</div>
<div class="t" style="left:102.10px;top:728px;font-size:11.5px;transform-origin:0 0;transform:scaleX(1.0487);">18</div>
<div class="a" style="left:166px;top:725px;width:100px;height:16px;background:#e6e6e6;border:1px solid #bcbcbc"></div>
<svg style="left:1203px;top:730px" width="12" height="12" viewBox="0 0 12 12"><g fill="#8c8c8c"><rect x="9" y="1" width="2" height="2"/><rect x="5" y="5" width="2" height="2"/><rect x="9" y="5" width="2" height="2"/><rect x="1" y="9" width="2" height="2"/><rect x="5" y="9" width="2" height="2"/><rect x="9" y="9" width="2" height="2"/></g></svg>
<div class="a" style="left:0px;top:0px;width:2px;height:745px;background:#0c0c0c"></div>
<div class="a" style="left:1217px;top:1px;width:1px;height:744px;background:#6e6e6e"></div>
<div class="a" style="left:0px;top:744px;width:1218px;height:1px;background:#6e6e6e"></div>
<div class="t blue" style="left:153.45px;top:361px;font-size:35px;transform-origin:0 0;transform:scaleX(1.0040);">Step N&deg; 1:</div>
<div class="t blue" style="left:94.36px;top:399px;font-size:17px;transform-origin:0 0;transform:scaleX(1.0348);">Register your raw material,</div>
<div class="t blue" style="left:33.80px;top:423px;font-size:17px;transform-origin:0 0;transform:scaleX(1.0306);">define a material code, specify the</div>
<div class="t blue" style="left:102.13px;top:447px;font-size:17px;transform-origin:0 0;transform:scaleX(1.0396);">factory length in 'mm', etc.</div>
<svg style="left:0;top:0" width="1218" height="745" viewBox="0 0 1218 745">
<path d="M104 472 H329.3 L593.5 246.8" fill="none" stroke="#0433ff" stroke-width="3.2" stroke-linejoin="miter"/>
<path d="M627.9 215.9 L601.8 221.6 L606.2 226.5 L589.1 242 L597.6 251.9 L615.3 236.5 L619.4 240.9 Z" fill="#0433ff"/>
</svg>
<div class="a" style="left:1209px;top:120px;width:1px;height:9px;background:#d2d2d2"></div>
</body>
</html>
